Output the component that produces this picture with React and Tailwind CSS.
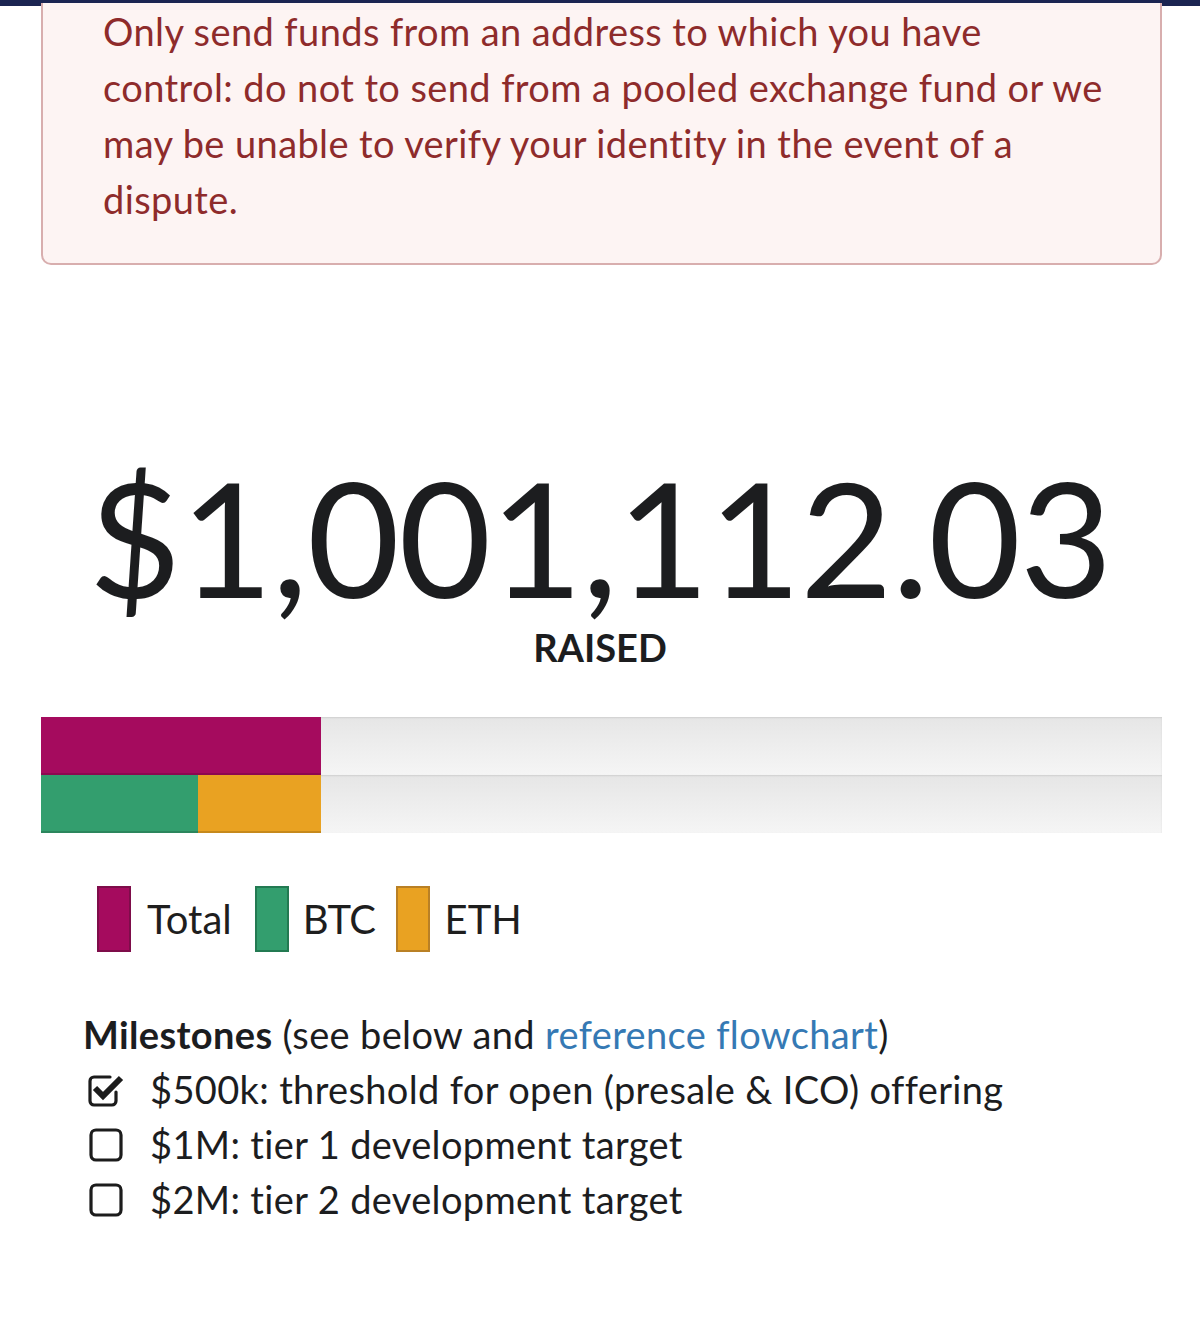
import React from "react";

const font = { fontFamily: "Lato, 'Noto Sans', sans-serif" };

function CheckedBox() {
  return (
    <svg width="40" height="40" viewBox="0 0 40 40" className="shrink-0">
      <path d="M30 22 V31 a4 4 0 0 1 -4 4 H8 a4 4 0 0 1 -4 -4 V11 a4 4 0 0 1 4 -4 H24" fill="none" stroke="#1c1c1c" strokeWidth="3.2" strokeLinecap="round" />
      <path d="M9 18 L17 26 L35 8" fill="none" stroke="#1c1c1c" strokeWidth="6" strokeLinejoin="miter" />
    </svg>
  );
}

function EmptyBox() {
  return (
    <svg width="40" height="40" viewBox="0 0 40 40" className="shrink-0">
      <rect x="5" y="5" width="30" height="30" rx="5" fill="none" stroke="#1c1c1c" strokeWidth="3.2" />
    </svg>
  );
}

export default function App() {
  return (
    <div className="w-[1200px] h-[1340px] bg-white text-[#1e1e1e] overflow-hidden" style={font}>
      <div className="h-[6px] bg-[#1b2552]" />
      <div className="pl-[41px] pr-[38px]">
        <div className="border-2 border-t-0 border-[#d8aeae] bg-[#fdf4f3] rounded-b-[10px] pl-[60px] pr-[30px] pt-0 pb-[36px]">
          <p className="-mt-[3px] text-[#8e2b2b] text-[38px] leading-[56px] tracking-[0.4px]">
            Only send funds from an address to which you have<br />
            control: do not to send from a pooled exchange fund or we<br />
            may be unable to verify your identity in the event of a<br />
            dispute.
          </p>
        </div>
      </div>

      <div className="mt-[201px] flex flex-col items-center">
        <div className="text-[160px] leading-[140px] tracking-[-1.2px] text-[#1c1d1f] font-normal">$1,001,112.03</div>
        <div className="mt-[26px] text-[38px] leading-[30px] font-bold text-[#1c1d1f]">RAISED</div>
      </div>

      <div className="pl-[41px] pr-[38px] mt-[55px]">
        <div className="flex flex-col">
          <div className="h-[58px] flex bg-gradient-to-b from-[#e6e6e6] to-[#f5f5f5] shadow-[inset_0_1px_2px_rgba(0,0,0,0.1)]">
            <div className="w-[280px] h-full bg-[#a50b5e] shadow-[inset_0_-2px_0_rgba(0,0,0,0.15)]" />
          </div>
          <div className="h-[58px] flex bg-gradient-to-b from-[#e6e6e6] to-[#f5f5f5] shadow-[inset_0_1px_2px_rgba(0,0,0,0.1)]">
            <div className="w-[157px] h-full bg-[#339e6e] shadow-[inset_0_-2px_0_rgba(0,0,0,0.15)]" />
            <div className="w-[123px] h-full bg-[#e9a222] shadow-[inset_0_-2px_0_rgba(0,0,0,0.15)]" />
          </div>
        </div>
      </div>

      <div className="mt-[53px] pl-[97px] flex items-center">
        <div className="w-[34px] h-[66px] bg-[#a50b5e] border-2 border-[#7e0d4a]" />
        <span className="ml-[16px] text-[40px] leading-[66px]">Total</span>
        <div className="ml-[23px] w-[34px] h-[66px] bg-[#339e6e] border-2 border-[#237a52]" />
        <span className="ml-[14px] text-[40px] leading-[66px] tracking-[-0.5px]">BTC</span>
        <div className="ml-[20px] w-[34px] h-[66px] bg-[#e9a222] border-2 border-[#b98025]" />
        <span className="ml-[15px] text-[40px] leading-[66px]">ETH</span>
      </div>

      <div className="mt-[55px] pl-[83px] text-[38px] leading-[55px] tracking-[0.35px] text-[#1c1d1f]">
        <div>
          <span className="font-bold">Milestones</span> (see below and{" "}
          <span className="text-[#3579b4]">reference flowchart</span>)
        </div>
        <div className="flex items-center">
          <span className="w-[67px] pl-[3px] flex"><CheckedBox /></span>
          <span>$500k: threshold for open (presale &amp; ICO) offering</span>
        </div>
        <div className="flex items-center">
          <span className="w-[67px] pl-[3px] flex"><EmptyBox /></span>
          <span>$1M: tier 1 development target</span>
        </div>
        <div className="flex items-center">
          <span className="w-[67px] pl-[3px] flex"><EmptyBox /></span>
          <span>$2M: tier 2 development target</span>
        </div>
      </div>
    </div>
  );
}
